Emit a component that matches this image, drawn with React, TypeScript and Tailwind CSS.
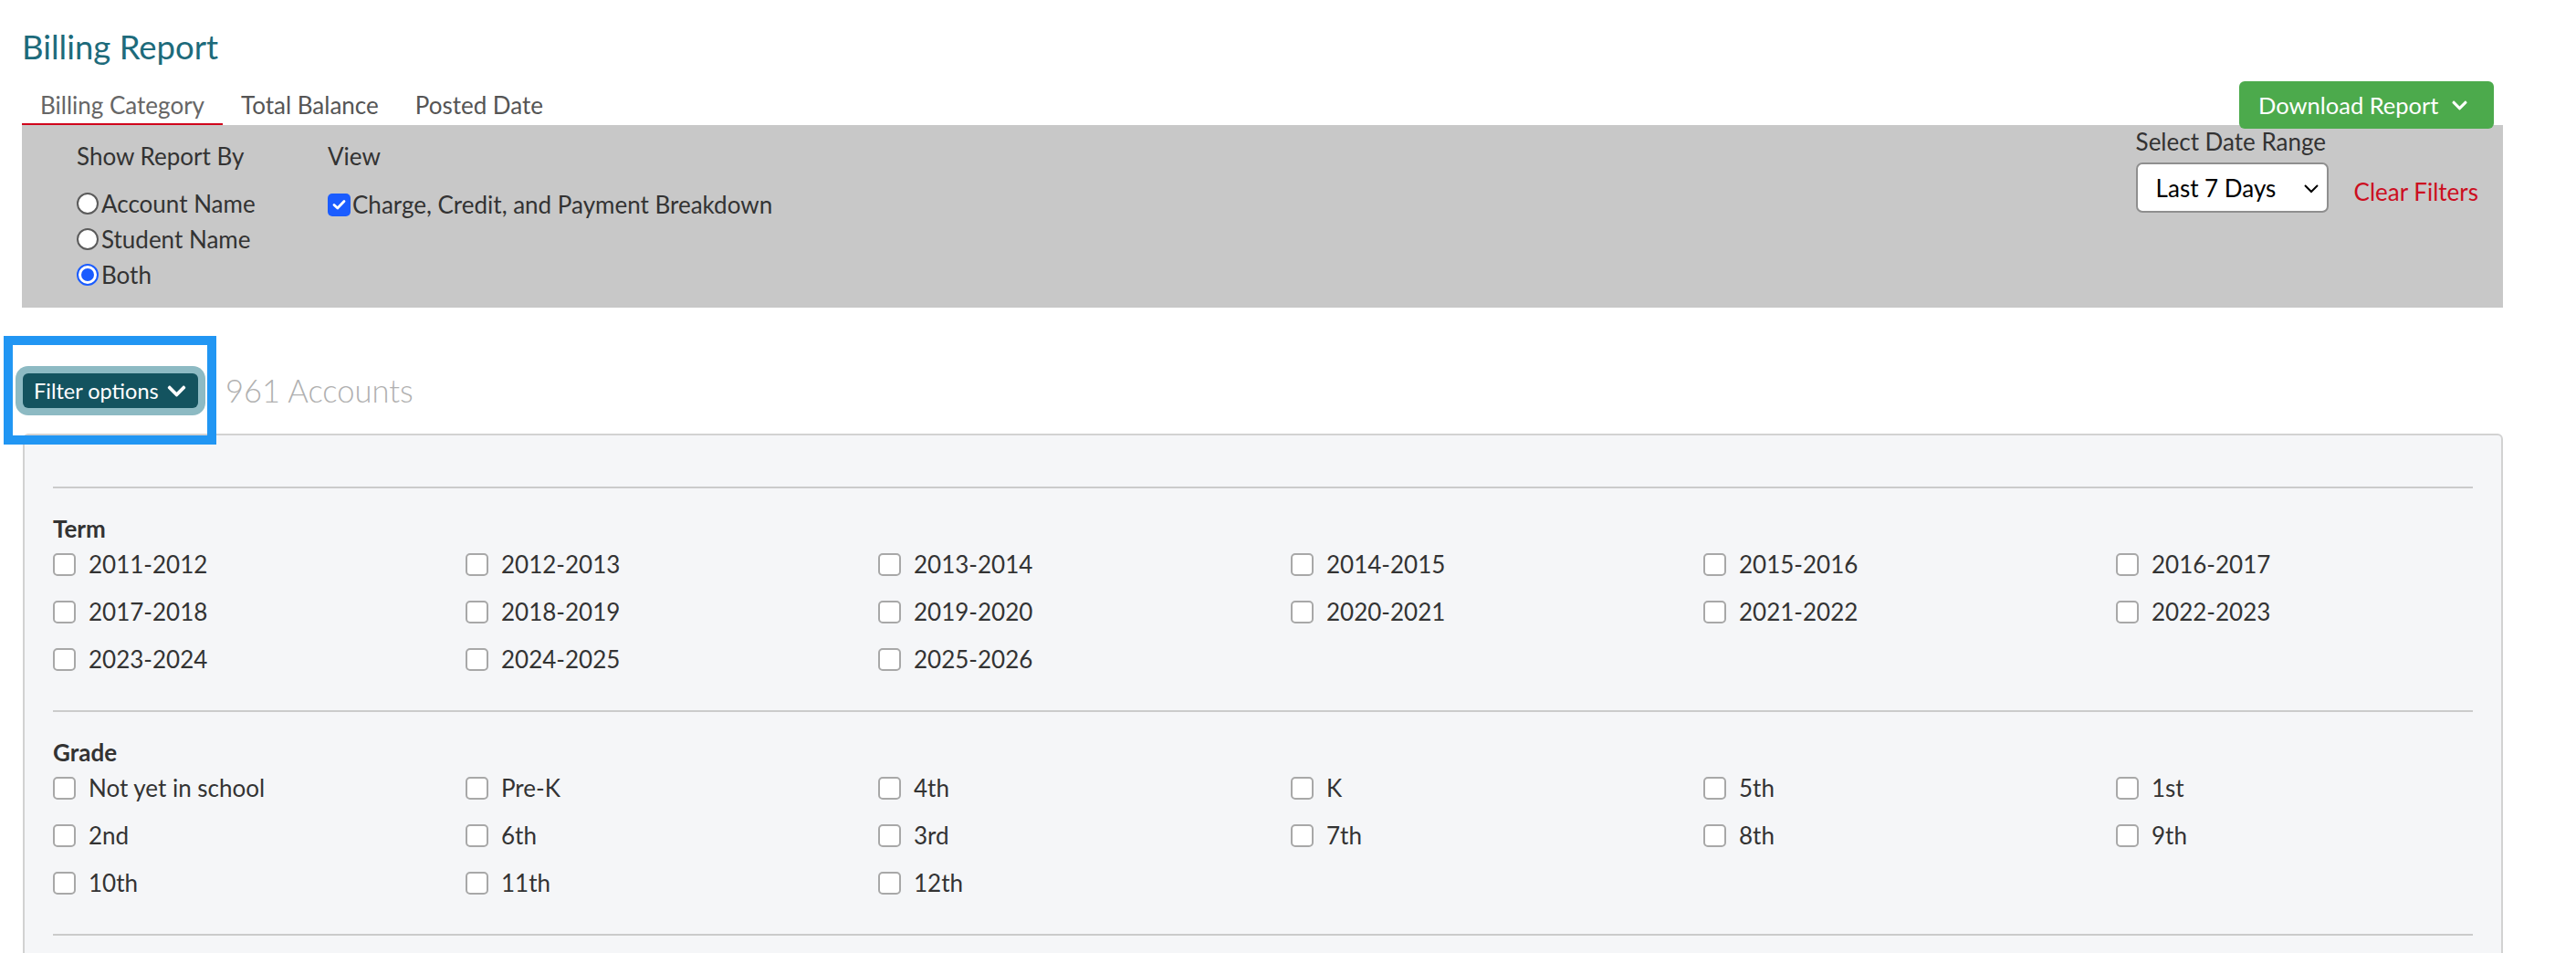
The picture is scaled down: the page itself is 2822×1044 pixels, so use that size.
import { FaChevronDown } from "react-icons/fa";

const terms = [
    "2011-2012",
    "2012-2013",
    "2013-2014",
    "2014-2015",
    "2015-2016",
    "2016-2017",
    "2017-2018",
    "2018-2019",
    "2019-2020",
    "2020-2021",
    "2021-2022",
    "2022-2023",
    "2023-2024",
    "2024-2025",
    "2025-2026",
];

const grades = [
    "Not yet in school",
    "Pre-K",
    "4th",
    "K",
    "5th",
    "1st",
    "2nd",
    "6th",
    "3rd",
    "7th",
    "8th",
    "9th",
    "10th",
    "11th",
    "12th",
];

const tabs = ["Billing Category", "Total Balance", "Posted Date"];

function Radio({ label, checked }: { label: string; checked?: boolean }) {
    return (
        <div className="flex items-center h-[39px]">
            {checked ? (
                <span className="w-[24px] h-[24px] rounded-full border-[2px] border-[#1a5cff] bg-white flex items-center justify-center">
                    <span className="w-[14px] h-[14px] rounded-full bg-[#1a5cff]" />
                </span>
            ) : (
                <span className="w-[24px] h-[24px] rounded-full border-[2px] border-[#5b5b5b] bg-white" />
            )}
            <span className="ml-[3px]">{label}</span>
        </div>
    );
}

function CheckItem({ label }: { label: string }) {
    return (
        <div className="flex items-center h-[52px]">
            <span className="w-[25px] h-[25px] rounded-[5px] border-[2px] border-[#a8a8a8] bg-white" />
            <span className="ml-[14px]">{label}</span>
        </div>
    );
}

function FilterSection({ title, items }: { title: string; items: string[] }) {
    return (
        <div className="border-t-2 border-[#cbcbcb] pt-[31px] pb-[30px]">
            <div className="font-bold leading-[26px]">{title}</div>
            <div className="grid grid-cols-[repeat(6,452px)]">
                {items.map((item) => (
                    <CheckItem key={item} label={item} />
                ))}
            </div>
        </div>
    );
}

export default function App() {
    return (
        <div className="min-h-screen bg-white font-['Lato',sans-serif] text-[26px] leading-[30px] text-[#333]">
            <div className="w-[2718px] ml-[24px]">
                <h1 className="pt-[31px] text-[36.5px] leading-[41px] text-[#1d6b7b]">
                    Billing Report
                </h1>

                <div className="flex items-end justify-between mt-[28px]">
                    <div className="flex">
                        {tabs.map((t, i) => (
                            <div
                                key={t}
                                className={`px-[20px] pb-[5px] border-b-2 ${
                                    i === 0
                                        ? "border-[#d0021b] text-[#666]"
                                        : "border-transparent text-[#555]"
                                }`}
                            >
                                {t}
                            </div>
                        ))}
                    </div>
                    <button className="relative z-10 mt-[-15px] mb-[-4px] mr-[10px] h-[52px] w-[279px] rounded-[6px] bg-[#4caa4c] text-white text-[25.5px] flex items-center pl-[21px]">
                        Download Report
                        <FaChevronDown className="ml-[14px] w-[19px] h-[19px]" />
                    </button>
                </div>

                <div className="bg-[#c8c8c8] h-[200px] flex justify-between">
                    <div className="flex pl-[60px] pt-[19px]">
                        <div className="w-[275px]">
                            <div>Show Report By</div>
                            <div className="mt-[17px]">
                                <Radio label="Account Name" />
                                <Radio label="Student Name" />
                                <Radio label="Both" checked />
                            </div>
                        </div>
                        <div>
                            <div>View</div>
                            <div className="mt-[17px] pt-[3px] flex items-center h-[39px]">
                                <span className="w-[25px] h-[25px] rounded-[5px] bg-[#1a5cff] flex items-center justify-center">
                                    <svg width="15" height="12" viewBox="0 0 15 12">
                                        <path
                                            d="M2 6.5 L5.8 10 L13 2.5"
                                            fill="none"
                                            stroke="white"
                                            strokeWidth="2.8"
                                            strokeLinecap="round"
                                            strokeLinejoin="round"
                                        />
                                    </svg>
                                </span>
                                <span className="ml-[2px]">
                                    Charge, Credit, and Payment Breakdown
                                </span>
                            </div>
                        </div>
                    </div>

                    <div className="flex pt-[3px] pr-[27px]">
                        <div>
                            <div>Select Date Range</div>
                            <div className="mt-[8px] w-[211px] h-[55px] rounded-[7px] border-2 border-[#8f8f8f] bg-white flex items-center justify-between pl-[20px] pr-[8px] text-black">
                                <span>Last 7 Days</span>
                                <svg width="18" height="12" viewBox="0 0 18 12">
                                    <path
                                        d="M2 3 L9 10 L16 3"
                                        fill="none"
                                        stroke="black"
                                        strokeWidth="2"
                                    />
                                </svg>
                            </div>
                        </div>
                        <span className="ml-[28px] mt-[55px] text-[#cc0e1f]">
                            Clear Filters
                        </span>
                    </div>
                </div>

                <div className="relative pt-[72px]">
                    <div className="absolute -left-[20px] top-[31px] w-[233px] h-[119px] border-[10px] border-[#2196f3]" />
                    <div className="flex items-center h-[38px]">
                        <button className="ml-[1px] h-[38px] w-[192px] rounded-[6px] bg-[#13535f] text-white text-[23.5px] flex items-center pl-[12px] ring-8 ring-[#8dbac3]">
                            Filter options
                            <FaChevronDown className="ml-[8px] w-[23px] h-[23px]" />
                        </button>
                        <span className="ml-[30px] text-[34.5px] leading-[38px] font-light text-[#b0b0b0]">
                            961 Accounts
                        </span>
                    </div>
                </div>

                <div className="mt-[28px] ml-[1px] rounded-t-[6px] border-2 border-[#d2d2d2] bg-[#f5f6f8] px-[31px] pt-[56px] pb-[60px]">
                    <FilterSection title="Term" items={terms} />
                    <FilterSection title="Grade" items={grades} />
                    <div className="border-t-2 border-[#cbcbcb] h-[60px]" />
                </div>
            </div>
        </div>
    );
}
